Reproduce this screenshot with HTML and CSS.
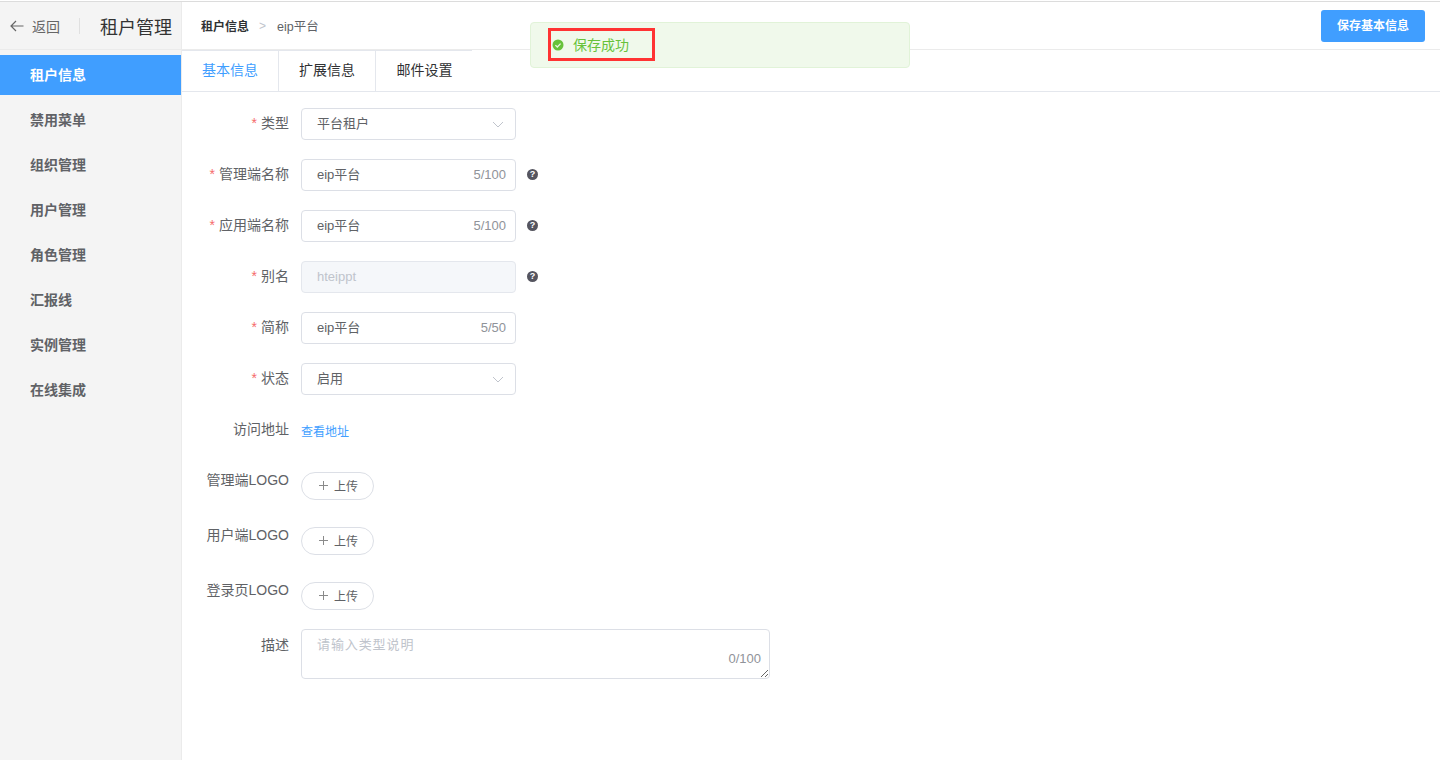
FILE: index.html
```html
<!DOCTYPE HTML>
<html lang="zh-CN">
  <head>
    <title>租户管理</title>
    <meta charset="UTF-8">
    <link rel="stylesheet" href="styles.css">
  </head>
  <body>
    <div class="app">
      <aside class="side">
        <div class="side-head">
          <span class="back">
            <svg class="back-icon" viewBox="0 0 14 12" width="14" height="12"><path d="M13.5 6H1M6 1 1 6l5 5" fill="none" stroke="#666" stroke-width="1.2"/></svg>
            返回
          </span>
          <span class="side-title">租户管理</span>
        </div>
        <ul class="menu">
          <li class="active">租户信息</li>
          <li>禁用菜单</li>
          <li>组织管理</li>
          <li>用户管理</li>
          <li>角色管理</li>
          <li>汇报线</li>
          <li>实例管理</li>
          <li>在线集成</li>
        </ul>
      </aside>

      <main class="main">
        <header class="top">
          <div class="crumb">
            <b>租户信息</b>
            <span class="sep">&gt;</span>
            <span class="crumb-now">eip平台</span>
          </div>
          <button class="save">保存基本信息</button>
        </header>

        <nav class="tabs">
          <a class="tab on">基本信息</a>
          <a class="tab">扩展信息</a>
          <a class="tab">邮件设置</a>
        </nav>

        <form class="form">
          <div class="row">
            <label class="req">类型</label>
            <div class="box"><span class="val">平台租户</span><svg class="arrow" viewBox="0 0 12 7" width="12" height="7"><path d="M1 1l5 5 5-5" fill="none" stroke="#c0c4cc" stroke-width="1"/></svg></div>
          </div>
          <div class="row">
            <label class="req">管理端名称</label>
            <div class="box"><span class="val">eip平台</span><span class="count">5/100</span></div>
            <span class="help">?</span>
          </div>
          <div class="row">
            <label class="req">应用端名称</label>
            <div class="box"><span class="val">eip平台</span><span class="count">5/100</span></div>
            <span class="help">?</span>
          </div>
          <div class="row">
            <label class="req">别名</label>
            <div class="box disabled"><span class="val">hteippt</span></div>
            <span class="help">?</span>
          </div>
          <div class="row">
            <label class="req">简称</label>
            <div class="box"><span class="val">eip平台</span><span class="count">5/50</span></div>
          </div>
          <div class="row">
            <label class="req">状态</label>
            <div class="box"><span class="val">启用</span><svg class="arrow" viewBox="0 0 12 7" width="12" height="7"><path d="M1 1l5 5 5-5" fill="none" stroke="#c0c4cc" stroke-width="1"/></svg></div>
          </div>
          <div class="row row-link">
            <label>访问地址</label>
            <a class="link">查看地址</a>
          </div>
          <div class="row row-up">
            <label>管理端LOGO</label>
            <button type="button" class="upload"><i class="plus"></i>上传</button>
          </div>
          <div class="row row-up">
            <label>用户端LOGO</label>
            <button type="button" class="upload"><i class="plus"></i>上传</button>
          </div>
          <div class="row row-up">
            <label>登录页LOGO</label>
            <button type="button" class="upload"><i class="plus"></i>上传</button>
          </div>
          <div class="row row-area">
            <label>描述</label>
            <div class="area">
              <textarea placeholder="请输入类型说明"></textarea>
              <span class="area-count">0/100</span>
            </div>
          </div>
        </form>
      </main>
    </div>

    <div class="toast">
      <svg viewBox="0 0 12 12" width="12" height="12"><circle cx="6" cy="6" r="5.5" fill="#67c23a"/><path d="M3.4 6.1 5.3 8l3.3-3.4" fill="none" stroke="#e8f5e0" stroke-width="1.3"/></svg>
      <span class="toast-text">保存成功</span>
    </div>
    <div class="mark"></div>
  </body>
</html>
```

FILE: styles.css
```css
* {
  box-sizing: border-box;
}

html, body {
  margin: 0;
  height: 100%;
  overflow: hidden;
}

body {
  background: #fff;
  color: #606266;
  font-family: "Liberation Sans", "Noto Sans CJK SC", sans-serif;
  font-size: 14px;
}

.app {
  display: flex;
  height: 759px;
  margin-top: 1px;
  border-top: 1px solid #dcdcdc;
}

/* left column */
.side {
  width: 182px;
  flex: none;
  background: #f4f4f4;
  border-right: 1px solid #ebebeb;
}

.side-head {
  display: flex;
  align-items: center;
  height: 48px;
  padding-left: 10px;
  border-bottom: 1px solid #ebebeb;
}

.back {
  display: flex;
  align-items: center;
  gap: 8px;
  width: 70px;
  height: 16px;
  border-right: 1px solid #e0e0e0;
  color: #666;
}

.side-title {
  margin-left: 20px;
  font-size: 18px;
  color: #333;
  white-space: nowrap;
}

.menu {
  list-style: none;
  margin: 5px 0 0;
  padding: 0;
}

.menu li {
  height: 40px;
  line-height: 40px;
  margin-bottom: 5px;
  padding-left: 30px;
  font-weight: bold;
  color: #606266;
}

.menu li.active {
  background: #409eff;
  color: #fff;
}

/* right column */
.main {
  flex: 1;
  min-width: 0;
}

.top {
  display: flex;
  align-items: center;
  justify-content: space-between;
  height: 48px;
  padding: 0 15px 0 19px;
  border-bottom: 1px solid #ebebeb;
}

.crumb {
  display: flex;
  align-items: center;
  font-size: 12px;
}

.crumb b {
  color: #303133;
}

.sep {
  margin: 0 11px 0 10px;
  color: #c0c4cc;
}

.crumb-now {
  font-size: 12.5px;
}

.save {
  width: 104px;
  height: 32px;
  padding: 0 0 2px;
  border: 0;
  border-radius: 3px;
  background: #409eff;
  color: #fff;
  font: bold 12px "Liberation Sans", "Noto Sans CJK SC", sans-serif;
}

.tabs {
  display: flex;
  height: 42px;
  border-bottom: 1px solid #e4e7ed;
  position: relative;
}

.tabs::before {
  content: "";
  position: absolute;
  left: 0;
  top: 0;
  width: 290px;
  border-top: 1px solid #e4e7ed;
}

.tab {
  width: 97px;
  line-height: 41px;
  text-align: center;
  color: #303133;
  border-right: 1px solid #e4e7ed;
}

.tab:last-child {
  border-right: 0;
}

.tab.on {
  color: #409eff;
}

/* form */
.form {
  padding-top: 16px;
}

.row {
  display: flex;
  align-items: flex-start;
  height: 32px;
  margin-bottom: 19px;
}

.row label {
  width: 107px;
  margin-right: 12px;
  line-height: 30px;
  text-align: right;
  white-space: nowrap;
}

.req::before {
  content: "*";
  margin-right: 4px;
  color: #f56c6c;
}

.box {
  display: flex;
  align-items: center;
  justify-content: space-between;
  width: 215px;
  height: 32px;
  padding: 0 9px 0 15px;
  border: 1px solid #dcdfe6;
  border-radius: 4px;
  font-size: 13px;
}

.val {
  padding-bottom: 4px;
}

.box.disabled {
  background: #f5f7fa;
  border-color: #e4e7ed;
  color: #c0c4cc;
}

.disabled .val {
  padding-bottom: 2px;
}

.count {
  padding-bottom: 2px;
  font-size: 13px;
  color: #909399;
}

.arrow {
  margin-right: 2px;
}

.help {
  width: 11px;
  height: 11px;
  margin: 10px 0 0 11px;
  border-radius: 50%;
  background: #55555f;
  color: #fff;
  font-size: 9px;
  font-weight: bold;
  line-height: 11px;
  text-align: center;
}

.row-link {
  height: 28px;
  margin-bottom: 30px;
}

.link {
  margin-top: 8px;
  color: #409eff;
  font-size: 12px;
}

.row-up {
  height: 28px;
  margin-bottom: 27px;
}

.row-up label {
  line-height: 16px;
}

.upload {
  display: flex;
  align-items: center;
  width: 73px;
  height: 28px;
  padding: 0 0 1px 17px;
  background: #fff;
  border: 1px solid #dcdfe6;
  border-radius: 14px;
  color: #606266;
  font: 12px "Liberation Sans", "Noto Sans CJK SC", sans-serif;
}

.plus {
  position: relative;
  width: 9px;
  height: 9px;
  margin-right: 6px;
  background:
    linear-gradient(#8a8a8a, #8a8a8a) center / 9px 1px no-repeat,
    linear-gradient(#8a8a8a, #8a8a8a) center / 1px 9px no-repeat;
}

.row-area {
  height: 50px;
  margin-top: -8px;
}

.row-area label {
  line-height: 32px;
}

.area {
  position: relative;
  width: 469px;
  height: 50px;
}

.area textarea {
  display: block;
  width: 469px;
  height: 50px;
  padding: 5px 15px;
  border: 1px solid #dcdfe6;
  border-radius: 4px;
  font: 13px/20px "Liberation Sans", "Noto Sans CJK SC", sans-serif;
  letter-spacing: 0.9px;
}

.area textarea::placeholder {
  color: #c0c4cc;
}

.area-count {
  position: absolute;
  right: 9px;
  bottom: 13px;
  font-size: 13px;
  color: #909399;
}

/* message and the red box drawn over it */
.toast {
  position: absolute;
  left: 530px;
  top: 22px;
  width: 380px;
  height: 46px;
  display: flex;
  align-items: center;
  gap: 9px;
  padding-left: 21px;
  background: #f0f9eb;
  border: 1px solid #e1f3d8;
  border-radius: 4px;
  color: #67c23a;
  font-size: 14px;
}

.toast-text {
  padding-bottom: 3px;
}

.mark {
  position: absolute;
  left: 548px;
  top: 28px;
  width: 107px;
  height: 33px;
  border: 3px solid #ff3333;
}
```
